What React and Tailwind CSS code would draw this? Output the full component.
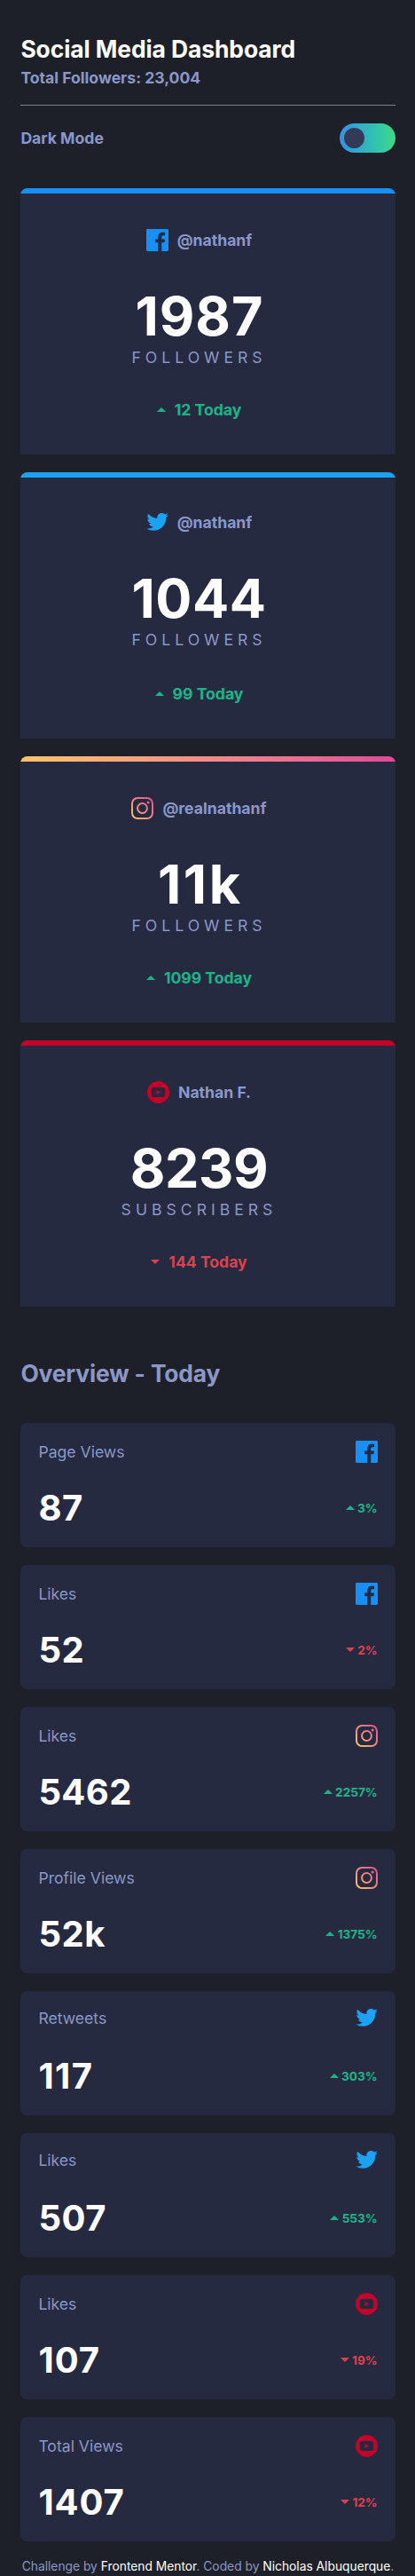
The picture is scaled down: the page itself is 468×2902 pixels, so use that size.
const FacebookIcon = () => (
  <svg width="25" height="25" viewBox="0 0 20 20" className="block shrink-0">
    <path fill="#178FF5" d="M18.896 0H1.104C.494 0 0 .494 0 1.104v17.793C0 19.506.494 20 1.104 20h9.58v-7.745H8.076V9.237h2.606V7.01c0-2.583 1.578-3.99 3.883-3.99 1.104 0 2.052.082 2.329.119v2.7h-1.598c-1.254 0-1.496.597-1.496 1.47v1.928h2.989l-.39 3.018h-2.6V20h5.098c.608 0 1.102-.494 1.102-1.104V1.104C20 .494 19.506 0 18.896 0z" />
  </svg>
);

const TwitterIcon = () => (
  <svg width="25" height="21" viewBox="-0.4 2.35 24.6 20.66" className="block shrink-0">
    <path fill="#1DA1F2" d="M24 4.557c-.883.392-1.832.656-2.828.775 1.017-.609 1.798-1.574 2.165-2.724-.951.564-2.005.974-3.127 1.195-.897-.957-2.178-1.555-3.594-1.555-3.179 0-5.515 2.966-4.797 6.045-4.091-.205-7.719-2.165-10.148-5.144-1.29 2.213-.669 5.108 1.523 6.574-.806-.026-1.566-.247-2.229-.616-.054 2.281 1.581 4.415 3.949 4.89-.693.188-1.452.232-2.224.084.626 1.956 2.444 3.379 4.6 3.419-2.07 1.623-4.678 2.348-7.29 2.04 2.179 1.397 4.768 2.212 7.548 2.212 9.142 0 14.307-7.721 13.995-14.646.962-.695 1.797-1.562 2.457-2.549z" />
  </svg>
);

const InstagramIcon = () => (
  <svg width="25" height="25" viewBox="0 0 20 20" className="block shrink-0">
    <defs>
      <linearGradient id="ig" x1="0" y1="1" x2="1" y2="0">
        <stop offset="0" stopColor="#FDC468" />
        <stop offset="1" stopColor="#DF4996" />
      </linearGradient>
    </defs>
    <path fill="url(#ig)" fillRule="evenodd" d="M5.8 0h8.4A5.8 5.8 0 0 1 20 5.8v8.4a5.8 5.8 0 0 1-5.8 5.8H5.8A5.8 5.8 0 0 1 0 14.2V5.8A5.8 5.8 0 0 1 5.8 0zm0 1.6A4.2 4.2 0 0 0 1.6 5.8v8.4a4.2 4.2 0 0 0 4.2 4.2h8.4a4.2 4.2 0 0 0 4.2-4.2V5.8a4.2 4.2 0 0 0-4.2-4.2zM10 4.86a5.14 5.14 0 1 1 0 10.28 5.14 5.14 0 0 1 0-10.28zm0 1.6a3.54 3.54 0 1 0 0 7.08 3.54 3.54 0 0 0 0-7.08zM15.34 3.5a1.2 1.2 0 1 1 0 2.4 1.2 1.2 0 0 1 0-2.4z" />
  </svg>
);

const YoutubeIcon = () => (
  <svg width="25" height="25" viewBox="0 0 20 20" className="block shrink-0">
    <path fill="#C4032B" fillRule="evenodd" d="M10 0a10 10 0 1 1 0 20 10 10 0 0 1 0-20zM6.2 5.65Q3.8 5.75 3.8 8v4q0 2.25 2.4 2.35h7.6Q16.2 14.25 16.2 12V8q0-2.25-2.4-2.35zM8.3 8l4 2-4 2z" />
  </svg>
);

const icons = { facebook: FacebookIcon, twitter: TwitterIcon, instagram: InstagramIcon, youtube: YoutubeIcon };

const Arrow = ({ down }) => (
  <svg width="10" height="5" viewBox="0 0 8 4" preserveAspectRatio="none" className="block shrink-0">
    <path fill="currentColor" d={down ? "M0 0h8L4 4z" : "M0 4h8L4 0z"} />
  </svg>
);

const bars = {
  facebook: "bg-[#178ff5]",
  twitter: "bg-[#1da1f2]",
  instagram: "bg-linear-to-r from-[#fdc468] to-[#df4996]",
  youtube: "bg-[#c4032b]",
};

const followers = [
  { net: "facebook", handle: "@nathanf", count: "1987", label: "FOLLOWERS", today: "12 Today", track: "tracking-[1px] -mr-px" },
  { net: "twitter", handle: "@nathanf", count: "1044", label: "FOLLOWERS", today: "99 Today", track: "tracking-[0.5px]" },
  { net: "instagram", handle: "@realnathanf", count: "11k", label: "FOLLOWERS", today: "1099 Today", track: "tracking-[2.6px] -mr-[2.6px]" },
  { net: "youtube", handle: "Nathan F.", count: "8239", label: "SUBSCRIBERS", today: "144 Today", track: "tracking-[-0.4px]", down: true },
];

const overview = [
  { net: "facebook", title: "Page Views", count: "87", pct: "3%", track: "tracking-[0.5px]" },
  { net: "facebook", title: "Likes", count: "52", pct: "2%", track: "tracking-[0.5px]", down: true },
  { net: "instagram", title: "Likes", count: "5462", pct: "2257%", track: "tracking-[0.4px]" },
  { net: "instagram", title: "Profile Views", count: "52k", pct: "1375%", track: "tracking-[0.5px]" },
  { net: "twitter", title: "Retweets", count: "117", pct: "303%", track: "tracking-[1.4px]" },
  { net: "twitter", title: "Likes", count: "507", pct: "553%", track: "tracking-[0.5px]" },
  { net: "youtube", title: "Likes", count: "107", pct: "19%", track: "tracking-[1px]", down: true },
  { net: "youtube", title: "Total Views", count: "1407", pct: "12%", track: "tracking-[0.9px]", down: true },
];

function FollowerCard({ net, handle, count, label, today, track, down }) {
  const Icon = icons[net];
  return (
    <article className="flex h-[300px] flex-col overflow-hidden rounded-t-lg bg-[#252a41]">
      <div className={`h-1.5 shrink-0 ${bars[net]}`} />
      <div className="flex grow flex-col items-center justify-between pt-10 pr-5 pb-10">
        <div className="flex items-center gap-2.5 font-bold">
          <Icon />
          <span>{handle}</span>
        </div>
        <div className="flex flex-col items-center">
          <p className={`mb-px text-[61px] leading-[70px] font-bold text-white ${track}`}>{count}</p>
          <p className="tracking-[5px]">{label}</p>
        </div>
        <div className={`flex items-center gap-2.5 font-bold ${down ? "text-[#dc414c]" : "text-[#1db489]"}`}>
          <Arrow down={down} />
          <span>{today}</span>
        </div>
      </div>
    </article>
  );
}

function OverviewCard({ net, title, count, pct, track, down }) {
  const Icon = icons[net];
  return (
    <article className="flex h-[140px] flex-col justify-between rounded-lg bg-[#252a41] p-5">
      <div className="flex items-center justify-between">
        <span>{title}</span>
        <Icon />
      </div>
      <div className="flex items-center justify-between">
        <span className={`text-[40px] leading-[49px] font-bold text-white ${track}`}>{count}</span>
        <div className={`flex items-center gap-[3.5px] text-[13.6px] font-bold ${down ? "text-[#dc414c]" : "text-[#1db489]"}`}>
          <Arrow down={down} />
          <span className="pt-px leading-[16px]">{pct}</span>
        </div>
      </div>
    </article>
  );
}

export default function App() {
  return (
    <div className="h-[2902px] overflow-hidden bg-[#1e2029] pr-[22.4px] pl-[23.4px] font-['Inter',sans-serif] text-[17.6px] leading-[21px] text-[#8b97c6]">
      <header className="flex flex-col pt-[39px]">
        <h1 className="text-[26.4px] leading-[32px] font-bold tracking-[-0.07px] text-white">Social Media Dashboard</h1>
        <p className="mt-1.5 font-bold">Total Followers: 23,004</p>
        <div className="mt-5 h-px bg-[#808080]" />
        <div className="mt-5 flex h-[33px] items-center justify-between">
          <span className="font-bold">Dark Mode</span>
          <button className="flex h-[33px] w-[63px] items-center rounded-full bg-linear-to-r from-[#378fe6] to-[#3eda82] pl-[5px]">
            <span className="size-[23px] rounded-full bg-[#333a56]" />
          </button>
        </div>
      </header>
      <section className="mt-10 flex flex-col gap-5">
        {followers.map((f) => (
          <FollowerCard key={f.net} {...f} />
        ))}
      </section>
      <h2 className="mt-[59px] text-[26.4px] leading-[32px] font-bold tracking-[-0.15px]">Overview - Today</h2>
      <section className="mt-10 flex flex-col gap-5">
        {overview.map((o) => (
          <OverviewCard key={o.net + o.title} {...o} />
        ))}
      </section>
      <footer className="mt-5 text-center text-[13.8px] leading-[16px] whitespace-nowrap">
        Challenge by <a className="text-white">Frontend Mentor</a>. Coded by <a className="text-white">Nicholas Albuquerque</a>.
      </footer>
    </div>
  );
}
